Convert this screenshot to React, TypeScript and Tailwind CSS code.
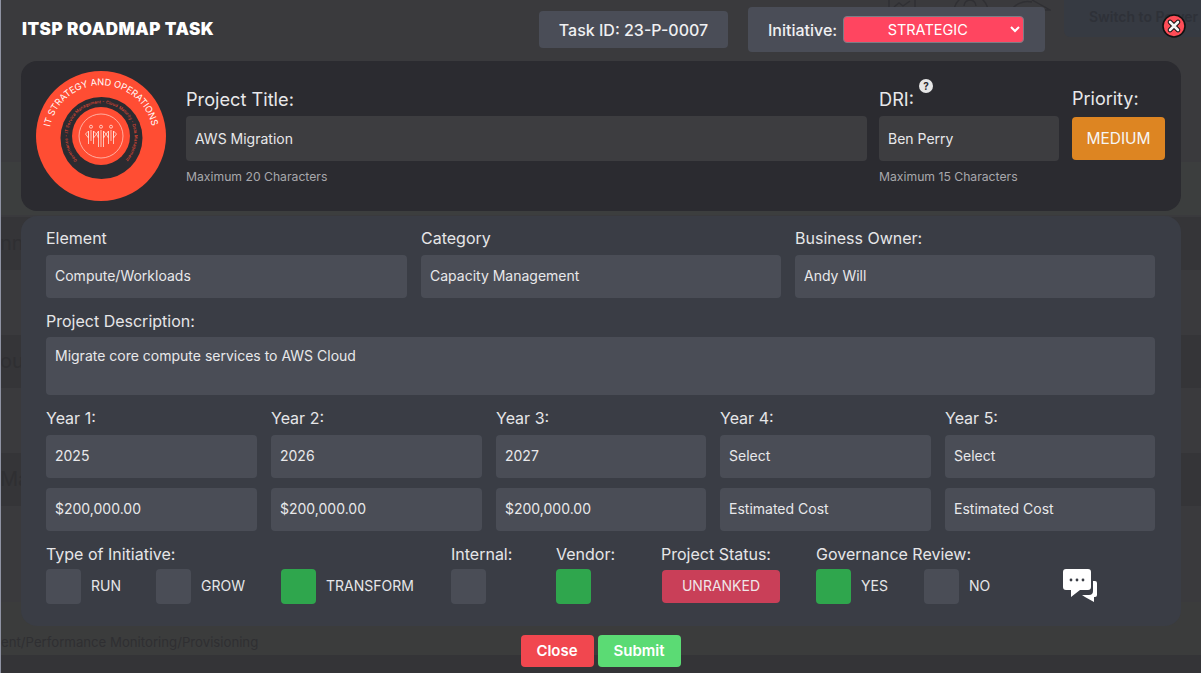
import React from 'react';

const font = { fontFamily: 'Inter, "Liberation Sans", sans-serif' };

const Field = ({ value, className = '' }: { value: string; className?: string }) => (
  <input
    readOnly
    value={value}
    className={`w-full h-[43px] rounded-[4px] bg-[#4a4d56] px-[9px] pb-[2px] text-[14px] text-[#e8e8ea] outline-none ${className}`}
  />
);

const Label = ({ children, className = '' }: { children: React.ReactNode; className?: string }) => (
  <div className={`text-[16px] leading-[20px] text-[#e6e6e8] ${className}`}>{children}</div>
);

const Check = ({ on, text, className = '' }: { on?: boolean; text?: string; className?: string }) => (
  <div className={`flex items-center ${className}`}>
    <div className={`w-[35px] h-[35px] rounded-[4px] ${on ? 'bg-[#2fa64d]' : 'bg-[#4a4d56]'}`} />
    {text && <span className="ml-[10px] pb-[2px] text-[14px] text-[#e6e6e8]">{text}</span>}
  </div>
);

const Logo = () => (
  <svg width="130" height="130" viewBox="0 0 130 130">
    <defs>
      <path id="outerArc" d="M 14 56 A 52 52 0 0 1 116 56" />
      <path id="innerArc" d="M 41.3 89.5 A 33.5 33.5 0 1 1 88.7 89.5" />
    </defs>
    <circle cx="65" cy="65" r="65" fill="#ff4d33" />
    <circle cx="65.5" cy="67" r="41" fill="#2b2b30" />
    <circle cx="65" cy="65" r="29" fill="#ff4d33" />
    <circle cx="65" cy="65" r="22" fill="none" stroke="#ffd9d0" strokeWidth="0.7" />
    <text fontSize="9.2" fill="#ffffff" fontFamily="Inter, sans-serif">
      <textPath href="#outerArc" textLength="142" lengthAdjust="spacing">IT STRATEGY AND OPERATIONS</textPath>
    </text>
    <text fontSize="4.1" fill="#ff4d33" fontFamily="Inter, sans-serif">
      <textPath href="#innerArc" textLength="156" lengthAdjust="spacing">Governance - IT Service Management - Cloud Maturity - Data Management</textPath>
    </text>
    <g stroke="#ffe3dc" strokeWidth="0.8" fill="none">
      <circle cx="55" cy="55.7" r="1.5" />
      <circle cx="65" cy="55.7" r="1.5" />
      <circle cx="75" cy="55.7" r="1.5" />
      <path d="M55 59v11M65 59v17M75 59v11M52.5 60v13M57.5 60v13M62.5 60v16M67.5 60v16M72.5 60v13M77.5 60v13" />
      <path d="M49.5 63l3-3v7zM57.5 60l3 3-3 4zM62.5 60l-2 3 2 4zM67.5 60l2.500 3-2.500 4zM72.5 60l-2.500 3 2.500 4zM77.5 60l3 3-3 4z" />
    </g>
  </svg>
);

const CloseIcon = () => (
  <svg width="24" height="24" viewBox="0 0 24 24">
    <circle cx="12" cy="12" r="11" fill="#ff4d57" stroke="#111" strokeWidth="1.6" />
    <path d="M8 8l8 8M16 8l-8 8" stroke="#111" strokeWidth="4.6" strokeLinecap="round" />
    <path d="M8 8l8 8M16 8l-8 8" stroke="#f2f2f2" strokeWidth="2.6" strokeLinecap="round" />
  </svg>
);

const ChatIcon = () => (
  <svg width="34" height="34" viewBox="0 0 34 34">
    <path d="M3 0h22a3 3 0 0 1 3 3v15a3 3 0 0 1-3 3H17l-9 7v-7H3a3 3 0 0 1-3-3V3a3 3 0 0 1 3-3z" fill="#fff" />
    <circle cx="8" cy="11" r="1.4" fill="#3a3d45" />
    <circle cx="14" cy="11" r="1.4" fill="#3a3d45" />
    <circle cx="20" cy="11" r="1.4" fill="#3a3d45" />
    <path d="M30 12h2a2 2 0 0 1 2 2v12a2 2 0 0 1-2 2h-1v5l-9-5-3-2h7a4 4 0 0 0 4-4z" fill="#fff" />
  </svg>
);

const GhostRow = ({ dark, green, text, className = '' }: { dark?: boolean; green?: boolean; text?: string; className?: string }) => (
  <div className={`relative overflow-hidden ${dark ? 'bg-[#353538]' : ''} ${green ? 'bg-[#3c3e3e] border-l border-l-[#6f8a55]' : ''} ${className}`}>
    {text && <div className="pt-[14px] text-[20px] leading-[24px] text-[#2f2f32] whitespace-nowrap">{text}</div>}
  </div>
);

export default function App() {
  const years = [
    { label: 'Year 1:', year: '2025', cost: '$200,000.00' },
    { label: 'Year 2:', year: '2026', cost: '$200,000.00' },
    { label: 'Year 3:', year: '2027', cost: '$200,000.00' },
    { label: 'Year 4:', year: 'Select', cost: 'Estimated Cost' },
    { label: 'Year 5:', year: 'Select', cost: 'Estimated Cost' },
  ];

  return (
    <div style={font} className="relative w-[1201px] h-[673px] overflow-hidden bg-[#3a3a3d]">
      {/* Page behind the modal, dimmed by the overlay */}
      <div className="absolute inset-0 flex flex-col">
        <div className="h-[162px] shrink-0" />
        <GhostRow green className="h-[53px] shrink-0" />
        <div className="h-[2px] shrink-0" />
        <GhostRow dark text="nn" className="h-[53px] shrink-0" />
        <div className="h-[65px] shrink-0" />
        <GhostRow dark text="out" className="h-[53px] shrink-0" />
        <div className="h-[65px] shrink-0" />
        <GhostRow dark text="Ma" className="h-[53px] shrink-0" />
        <div className="h-[96px] shrink-0" />
        <div className="h-[53px] shrink-0 overflow-hidden border-l border-l-[#6f8a55] bg-[#3b3c3c] pt-[31px] text-[13.2px] text-[#2f2f32] whitespace-nowrap">
          ent/Performance Monitoring/Provisioning
        </div>
        <div className="flex-1 bg-[#343437]" />
      </div>
      <div className="absolute left-0 top-0 h-full w-px bg-[#8f93a3]" />
      <svg className="absolute left-[886px] top-0" width="165" height="12" viewBox="0 0 165 12" fill="none" stroke="#303034" strokeWidth="1.4">
        <path d="M3 0v10h26V0M8 7l5-4 4 3 7-5" />
        <path d="M68 12a16 16 0 0 1 34 0M78 6a6 6 0 0 1 12 0" />
        <path d="M124 12a20 20 0 0 1 22-10M146 0l18 10h-14" />
      </svg>
      <div className="absolute right-0 top-0 h-[37px] w-[137px] overflow-hidden rounded-bl-[6px] bg-[#363a42] pl-[25px] pt-[6px] text-[14px] font-semibold whitespace-nowrap text-[#2e3138]">
        Switch to Power
      </div>

      {/* Modal */}
      <div className="relative flex h-full flex-col pl-[21px] pr-[20px]">
        <header className="flex h-[61px] shrink-0 items-start">
          <h1 className="ml-px mt-[20px] w-[193px] text-[17px] leading-[18px] font-black tracking-[0.5px] text-white whitespace-nowrap">
            ITSP ROADMAP TASK
          </h1>
          <div className="ml-[324px] mt-[11px] flex h-[37px] w-[189px] items-center justify-center rounded-[4px] bg-[#4a4d57] text-[16px] font-medium text-[#f0f0f2]">
            Task ID: 23-P-0007
          </div>
          <div className="ml-[20px] mt-[7px] flex h-[45px] w-[297px] items-center rounded-[4px] bg-[#4a4d57] pl-[20px]">
            <span className="mr-[6px] text-[16px] font-medium text-[#f0f0f2]">Initiative:</span>
            <select className="h-[27px] w-[181px] rounded-[4px] border border-[#7a7d86] bg-[#ff4560] text-center text-[14.5px] text-white">
              <option>STRATEGIC</option>
            </select>
          </div>
          <button className="ml-auto -mr-[5px] mt-[14px]">
            <CloseIcon />
          </button>
        </header>

        <section className="flex h-[150px] shrink-0 rounded-[16px] bg-[#2b2b30] px-[15px] pt-[10px]">
          <Logo />
          <div className="ml-[20px] w-[681px]">
            <div className="mt-[17px] text-[18.2px] leading-[22px] text-[#e8e8ea]">Project Title:</div>
            <input readOnly value="AWS Migration" className="mt-[6px] h-[45px] w-full rounded-[4px] bg-[#3d3d40] px-[9px] text-[14px] text-[#e8e8ea] outline-none" />
            <div className="mt-[7px] text-[12.2px] text-[#a8a8ac]">Maximum 20 Characters</div>
          </div>
          <div className="ml-[12px] w-[180px]">
            <div className="relative mt-[17px] text-[18.2px] leading-[22px] text-[#e8e8ea]">
              DRI:
              <span className="absolute left-[40px] -top-[9px] flex h-[14px] w-[14px] items-center justify-center rounded-full bg-[#e6e6e6] text-[10px] font-bold text-[#2b2b30]">?</span>
            </div>
            <input readOnly value="Ben Perry" className="mt-[6px] h-[45px] w-full rounded-[4px] bg-[#3d3d40] px-[9px] text-[14px] text-[#e8e8ea] outline-none" />
            <div className="mt-[7px] text-[12.2px] text-[#a8a8ac]">Maximum 15 Characters</div>
          </div>
          <div className="ml-[13px] w-[93px]">
            <div className="mt-[17px] text-[18px] leading-[22px] text-[#e8e8ea]">Priority:</div>
            <div className="mt-[7px] flex h-[43px] items-center justify-center rounded-[4px] bg-[#dd8522] text-[15.5px] text-[#f5f5f5]">MEDIUM</div>
          </div>
        </section>

        <section className="mt-[5px] h-[410px] shrink-0 rounded-[16px] bg-[#3a3d45] pl-[25px] pr-[26px] pt-[12px]">
          <div className="grid grid-cols-[361px_360px_360px] gap-x-[14px]">
            <div>
              <Label>Element</Label>
              <Field value="Compute/Workloads" className="mt-[7px]" />
            </div>
            <div>
              <Label>Category</Label>
              <Field value="Capacity Management" className="mt-[7px]" />
            </div>
            <div>
              <Label>Business Owner:</Label>
              <Field value="Andy Will" className="mt-[7px]" />
            </div>
          </div>

          <Label className="mt-[13px]">Project Description:</Label>
          <textarea
            readOnly
            value="Migrate core compute services to AWS Cloud"
            className="mt-[6px] block h-[58px] w-full resize-none rounded-[4px] bg-[#4a4d56] px-[9px] pt-[8px] text-[14px] text-[#e8e8ea] outline-none"
          />

          <div className="mt-[13px] grid grid-cols-[211px_211px_210px_211px_210px] gap-x-[14px]">
            {years.map((y) => (
              <div key={y.label}>
                <Label>{y.label}</Label>
                <Field value={y.year} className="mt-[7px]" />
                <Field value={y.cost} className="mt-[10px]" />
              </div>
            ))}
          </div>

          <div className="mt-[13px] flex">
            <div className="w-[405px]">
              <Label>Type of Initiative:</Label>
              <div className="mt-[5px] flex">
                <Check text="RUN" className="w-[110px]" />
                <Check text="GROW" className="w-[125px]" />
                <Check on text="TRANSFORM" />
              </div>
            </div>
            <div className="w-[105px]">
              <Label>Internal:</Label>
              <Check className="mt-[5px]" />
            </div>
            <div className="w-[105px]">
              <Label>Vendor:</Label>
              <Check on className="mt-[5px]" />
            </div>
            <div className="w-[155px]">
              <Label>Project Status:</Label>
              <div className="ml-px mt-[6px] flex h-[33px] w-[118px] items-center justify-center rounded-[4px] bg-[#c93f58] pb-[2px] text-[14px] text-[#f0e6e8]">UNRANKED</div>
            </div>
            <div>
              <Label>Governance Review:</Label>
              <div className="mt-[5px] flex">
                <Check on text="YES" className="w-[108px]" />
                <Check text="NO" />
              </div>
            </div>
            <div className="ml-[73px] mt-[25px] shrink-0">
              <ChatIcon />
            </div>
          </div>
        </section>

        <footer className="mt-[9px] flex justify-center gap-[4px] pr-[1px]">
          <button className="h-[32px] w-[73px] rounded-[4px] bg-[#f1474f] text-[15px] font-semibold text-white">Close</button>
          <button className="h-[32px] w-[83px] rounded-[4px] bg-[#5bdb74] text-[15px] font-semibold text-white">Submit</button>
        </footer>
      </div>
    </div>
  );
}
